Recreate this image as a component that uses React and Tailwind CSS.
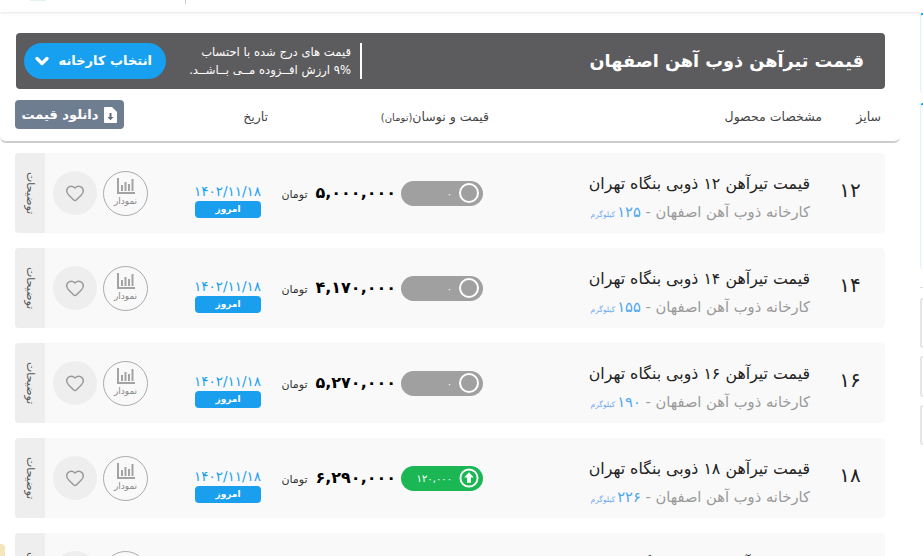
import { Heart, ChevronDown } from 'lucide-react';

const rows = [
    { size: '۱۲', weight: '۱۲۵', price: '۵,۰۰۰,۰۰۰', change: '۰' },
    { size: '۱۴', weight: '۱۵۵', price: '۴,۱۷۰,۰۰۰', change: '۰' },
    { size: '۱۶', weight: '۱۹۰', price: '۵,۲۷۰,۰۰۰', change: '۰' },
    { size: '۱۸', weight: '۲۲۶', price: '۶,۲۹۰,۰۰۰', change: '۱۲۰,۰۰۰', up: true },
    { size: '۲۰', weight: '۲۶۰', price: '۷,۱۰۰,۰۰۰', change: '۰' },
];

const ChartIcon = () => (
    <svg width="18" height="16" viewBox="0 0 18 16" fill="#a3a3a3">
        <path d="M0 0h2v14h16v2H0z" />
        <rect x="4" y="7" width="2" height="6" />
        <rect x="7.5" y="4" width="2" height="9" />
        <rect x="11" y="6" width="2" height="7" />
        <rect x="14.5" y="1" width="2" height="12" />
    </svg>
);

const FileIcon = () => (
    <svg width="13" height="16" viewBox="0 0 13 16">
        <path d="M0 1a1 1 0 0 1 1-1h7l5 5v10a1 1 0 0 1-1 1H1a1 1 0 0 1-1-1z" fill="#fff" />
        <path d="M5.5 6h2v4h2l-3 3.2L3.500 10h2z" fill="#5f6d80" />
    </svg>
);

const ArrowCircle = () => (
    <svg width="20" height="20" viewBox="0 0 21 21">
        <circle cx="10.5" cy="10.5" r="9" fill="none" stroke="#fff" strokeWidth="2" />
        <path d="M10.500 4.500l5 5.500h-3v5.500h-4V10h-3z" fill="#fff" />
    </svg>
);

const Row = ({ row }) => (
    <div className="flex h-20 w-[870px] shrink-0 items-center overflow-hidden rounded bg-[#f9f9f9]">
        <div className="w-[75px] shrink-0 pb-1.5 pl-[5px] text-center text-xl text-[#222]">{row.size}</div>
        <div className="w-[327px] shrink-0 pt-[13px]">
            <div className="text-[15.8px] leading-7 text-[#222]">قیمت تیرآهن {row.size} ذوبی بنگاه تهران</div>
            <div className="flex items-baseline text-[14.7px] leading-7 text-[#999]">
                <span>کارخانه ذوب آهن اصفهان -&nbsp;</span>
                <span className="text-[#4da6f0]">{row.weight}</span>
                <span className="mr-0.5 text-[7.5px] text-[#6ea8f0]">کیلوگرم</span>
            </div>
        </div>
        <div
            className={`flex h-[25px] w-[82px] shrink-0 items-center gap-[7px] rounded-full px-[4px] ${row.up ? 'bg-[#1cb755]' : 'bg-[#a0a0a0]'}`}
        >
            {row.up ? (
                <ArrowCircle />
            ) : (
                <span className="size-5 rounded-full border-2 border-white" />
            )}
            <span className="text-[10px] text-white">{row.change}</span>
        </div>
        <div className="flex w-[140px] shrink-0 items-center gap-2 pr-[5px]">
            <span className="text-base font-bold text-black">{row.price}</span>
            <span className="mt-1 text-[11px] text-[#333]">تومان</span>
        </div>
        <div className="mt-3 flex w-[66px] shrink-0 flex-col items-stretch">
            <span className="text-center text-[13.5px] leading-5 text-[#1a9fef]">۱۴۰۲/۱۱/۱۸</span>
            <span className="h-[17px] rounded-sm bg-[#1a9fef] text-center text-[9px] leading-[17px] font-bold text-white">
                امروز
            </span>
        </div>
        <div className="mr-[47px] flex size-[45px] shrink-0 flex-col items-center justify-center rounded-full border border-[#aaa]">
            <ChartIcon />
            <span className="text-[9px] leading-[14px] text-[#888]">نمودار</span>
        </div>
        <div className="mr-1.5 flex size-11 shrink-0 items-center justify-center rounded-full bg-[#eeeeee]">
            <Heart size={20} strokeWidth={1.75} color="#999" />
        </div>
        <div className="mr-2 flex h-full w-[30px] shrink-0 items-center justify-center bg-[#eeeeee] text-[11px] text-[#555] [writing-mode:vertical-rl]">
            توضیحات
        </div>
    </div>
);

export default function App() {
    return (
        <div
            dir="rtl"
            className="relative h-[556px] w-[923px] overflow-hidden bg-white [font-family:'DejaVu_Sans','Noto_Sans',sans-serif]"
        >
            <div className="relative h-3 shadow-[0_1px_3px_rgba(0,0,0,0.1)]">
                <div className="absolute top-0 left-[185px] h-1 w-px bg-[#cccccc]" />
                <div className="absolute top-0 left-[30px] h-px w-4 bg-[#dff3e6]" />
            </div>

            <div className="flex items-start pt-px">
                {/* side column, mostly off the page */}
                <div className="flex w-[23px] shrink-0 flex-col pl-5">
                    <div className="h-20 rounded-l-sm border-t-2 border-l border-t-[#1a9fef] border-l-[#e3f2fb] bg-[#f9fdff]" />
                    <div className="mt-2.5 h-[166px] rounded-l-sm border-t-2 border-l border-t-[#1a9fef] border-l-[#e3f2fb] bg-[#f9fdff]" />
                    <div className="mt-[18px] h-px bg-[#dddddd]" />
                    <div className="mt-2.5 h-[50px] rounded-l border-y-2 border-l-2 border-[#e5e5e5]" />
                    <div className="mt-2 h-[41px] rounded-l border-y-2 border-l-2 border-[#e5e5e5]" />
                    <div className="mt-2 h-[40px] rounded-l border-y-2 border-l-2 border-[#e5e5e5]" />
                </div>

                <div className="w-[900px] shrink-0">
                    <div className="rounded-b-md border-b-2 border-[#cccccc] pr-[15px] pl-[15px]">
                        <div className="mt-5 flex h-14 w-[869px] items-center rounded-sm bg-[#5c5b5d] pr-[21px] pl-2 text-white">
                            <h1 className="w-[502px] text-[17.7px] font-bold">قیمت تیرآهن ذوب آهن اصفهان</h1>
                            <div className="h-9 w-0.5 bg-white" />
                            <p className="mr-[9px] w-[185px] text-[11.6px] leading-[18px]">
                                قیمت های درج شده با احتساب
                                <br />
                                ۹% ارزش افــزوده مــی بــاشــد.
                            </p>
                            <button className="mr-auto flex h-9 w-[142px] items-center justify-between rounded-full bg-[#16a0ef] pr-3.5 pl-2 text-[13px] font-bold">
                                انتخاب کارخانه
                                <ChevronDown size={20} strokeWidth={4} />
                            </button>
                        </div>
                        <div className="flex h-[52px] items-start pt-[11px] text-[12.5px] text-[#444]">
                            <span className="mt-2 mr-1 w-[59px]">سایز</span>
                            <span className="mt-2 w-[333px]">مشخصات محصول</span>
                            <span className="mt-2 w-[221px]">
                                قیمت و نوسان<span className="text-[10px]">(تومان)</span>
                            </span>
                            <span className="mt-2">تاریخ</span>
                            <button className="mr-auto flex h-[29px] w-[109px] items-center justify-center gap-1.5 rounded-sm bg-[#6f7d91] text-[13px] font-bold text-white">
                                <FileIcon />
                                دانلود قیمت
                            </button>
                        </div>
                    </div>
                    <div className="mt-2.5 flex flex-col gap-[15px] pr-[15px]">
                        {rows.map((row) => (
                            <Row key={row.size} row={row} />
                        ))}
                    </div>
                </div>
            </div>

            <div className="absolute bottom-0 left-0 h-3 w-[5px] rounded-tr bg-[#f3e6bd]" />
        </div>
    );
}
